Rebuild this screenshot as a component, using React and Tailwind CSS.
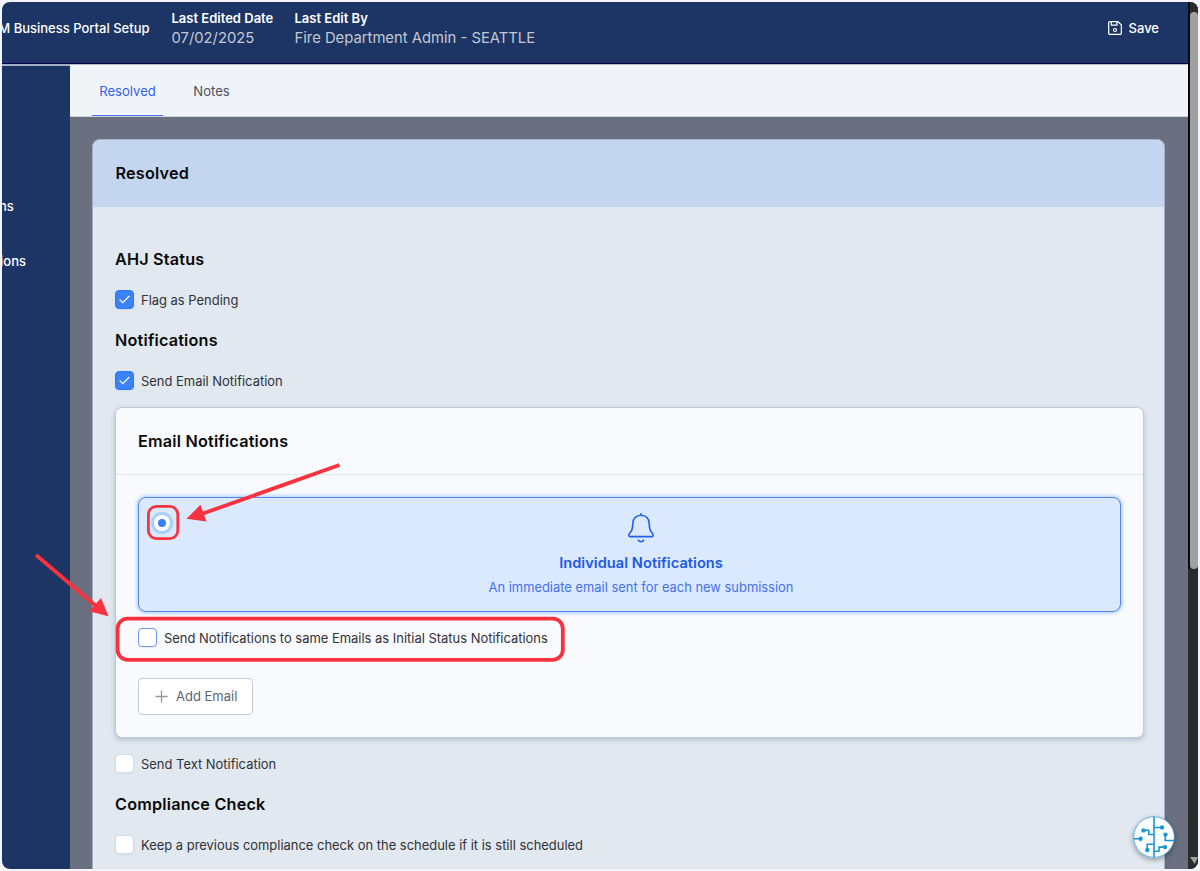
import { useState } from "react";

const tabs = ["Resolved", "Notes"];

const SaveIcon = () => (
  <svg width="14" height="14" viewBox="0 0 14 14" fill="none" stroke="currentColor" strokeWidth="1.2">
    <path d="M1.8 0.7h8.1l3.4 3.1v8.4a1.1 1.1 0 0 1-1.1 1.1H1.8a1.1 1.1 0 0 1-1.1-1.1V1.8A1.1 1.1 0 0 1 1.8 0.7z" />
    <path d="M3.3 0.9v3.3h5.6V0.9" />
    <circle cx="7" cy="9" r="1.5" />
  </svg>
);

const BellIcon = () => (
  <svg width="26" height="30" viewBox="0 0 26 30" fill="none" stroke="#2360e8" strokeWidth="1.6" strokeLinecap="round">
    <path d="M13 0.8v1.4" />
    <path d="M13 2.2c-5 0-8.2 3.4-8.2 8.2 0 5-0.8 7.4-3 9.6-1.3 1.4-1.3 3.6 0.4 3.6h21.6c1.7 0 1.7-2.2 0.4-3.6-2.2-2.2-3-4.6-3-9.6 0-4.8-3.2-8.2-8.2-8.2z" />
    <path d="M10.3 27.2c1.1 2 4.3 2 5.4 0" />
  </svg>
);

const CircuitLogo = () => (
  <svg width="42" height="42" viewBox="0 0 42 42" fill="none" stroke="#1b96d4" strokeWidth="1.6">
    <circle cx="21" cy="21" r="20.3" fill="#fff" strokeWidth="0.7" />
    <path d="M21 0.8v40.4" />
    <path d="M21 11.5h8M10 14.3h5.8v4.2h5.2M0.6 22.7h7M21 28.3h-6.8v6M32.3 18.7v5.8h9M21 35.3h5v-4.2h6" />
    <g fill="#1b96d4" stroke="none">
      <circle cx="29" cy="11.4" r="2.2" />
      <circle cx="10.5" cy="14.4" r="2.2" />
      <circle cx="7.6" cy="22.8" r="2.2" />
      <circle cx="32.5" cy="18.6" r="2.2" />
      <circle cx="14.3" cy="34" r="2.2" />
      <circle cx="32" cy="31.1" r="2.2" />
    </g>
  </svg>
);

const CheckRow = ({ label, defaultChecked = false, outlined = false, className = "" }) => {
  const [checked, setChecked] = useState(defaultChecked);

  const boxStyle = checked
    ? "bg-[#3b82f6] border-[#2b7af5]"
    : outlined
      ? "bg-white border-[#6d97f5]"
      : "bg-white border-[#d3dbe6]";

  return (
    <div
      onClick={() => setChecked(!checked)}
      className={`flex h-[18px] items-start gap-x-[7px] ${className}`}
    >
      <span
        className={`-mt-px flex h-[19px] w-[19px] shrink-0 items-center justify-center rounded-[4px] border shadow-xs ${boxStyle}`}
      >
        {checked && (
          <svg width="11" height="9" viewBox="0 0 11 9" fill="none" stroke="#fff" strokeWidth="1.1">
            <path d="M0.6 4.4l3.2 3.2L10.3 1" />
          </svg>
        )}
      </span>
      <span className="whitespace-nowrap text-[12.94px] leading-[18px] text-[#2f3237]">{label}</span>
    </div>
  );
};

const SectionTitle = ({ children, className = "" }) => (
  <h3 className={`h-6 text-[16.2px] font-semibold leading-6 tracking-[0.2px] text-[#0a0a0a] ${className}`}>
    {children}
  </h3>
);

// red arrows and frames over the form
const Callouts = () => (
  <svg className="pointer-events-none absolute left-0 top-0" width="1200" height="871" fill="none">
    <g stroke="#f8333f" strokeWidth="3.8">
      <path d="M339.5 465L203 513.5" />
      <path d="M36 555L96 606" />
      <rect x="148.4" y="506.3" width="29.4" height="32.4" rx="8" strokeWidth="2.8" />
      <rect x="117.6" y="618.6" width="445.2" height="41.2" rx="10" />
    </g>
    <path d="M186.5 518.8L200.5 504.8L206.5 521.6z" fill="#f8333f" />
    <path d="M108.5 616.3L101 598L89 611.3z" fill="#f8333f" />
  </svg>
);

const App = () => {
  const [activeTab, setActiveTab] = useState("Resolved");

  return (
    <div className="relative h-[871px] w-[1200px] overflow-hidden bg-[#f4f5fb] p-0.5 font-['Inter',sans-serif]">
      <div className="flex h-[867px] w-[1196px] overflow-hidden rounded-[8px] bg-[#1c3564]">

        <div className="flex w-[1186px] shrink-0 flex-col">
          {/* top bar */}
          <header className="flex h-[62px] shrink-0 border-b border-[#03034f] text-white">
            <div className="flex w-[147.5px] shrink-0 justify-end overflow-hidden">
              <p className="mt-[15.5px] whitespace-nowrap text-[13px] font-medium leading-5">M Business Portal Setup</p>
            </div>
            <div className="ml-[22px] mt-[7px] w-[123px]">
              <p className="whitespace-nowrap text-[13px] font-semibold leading-[19px]">Last Edited Date</p>
              <p className="text-[14.8px] leading-5 text-[#c3c8d2]">07/02/2025</p>
            </div>
            <div className="mt-[7px]">
              <p className="text-[13px] font-semibold leading-[19px]">Last Edit By</p>
              <p className="text-[14.8px] leading-5 text-[#c3c8d2]">Fire Department Admin - SEATTLE</p>
            </div>
            <button className="ml-auto mr-[29px] mt-4 flex h-5 items-center gap-x-[7px] text-[13px] font-medium">
              <SaveIcon />
              <span className="pt-px">Save</span>
            </button>
          </header>

          <div className="flex min-h-0 flex-1">
            <aside className="w-[68px] shrink-0 overflow-hidden border-t-2 border-t-[#a4aec4] text-[13px] font-medium leading-5 text-white">
              <p className="ml-[-3px] mt-[130px]">ns</p>
              <p className="ml-[-2px] mt-[35px]">ions</p>
            </aside>

            <main className="flex min-w-0 flex-1 flex-col bg-[#6b7080]">
              <nav className="flex h-[53px] shrink-0 border-b border-t border-b-[#cbd3e0] border-t-[#b6bfd0] bg-[#f0f4f9] pl-[22px]">
                {tabs.map((tab) => (
                  <button
                    key={tab}
                    onClick={() => setActiveTab(tab)}
                    className={`mr-[22px] h-[51px] border-b pt-[3px] text-[13.1px] ${
                      activeTab === tab
                        ? "w-[71px] border-b-[#4f74f0] text-[#3461ea]"
                        : "w-[53px] border-b-transparent text-[#4b5059]"
                    }`}
                  >
                    {tab}
                  </button>
                ))}
              </nav>

              <section className="ml-[22px] mt-[22px] min-h-0 w-[1073px] flex-1 overflow-hidden rounded-t-[8px] border border-b-0 border-[#a3afc6] bg-[#e1e8f0]">
                <div className="flex h-[67px] items-center bg-[#c4d5f0] pb-0.5 pl-[22.5px]">
                  <h2 className="text-[16.2px] font-semibold leading-6 tracking-[0.2px] text-[#0a0a0a]">Resolved</h2>
                </div>

                <div className="pl-[22px] pr-5 pt-10">
                  <SectionTitle>AHJ Status</SectionTitle>
                  <CheckRow label="Flag as Pending" defaultChecked className="mt-5" />

                  <SectionTitle className="mt-[19px]">Notifications</SectionTitle>
                  <CheckRow label="Send Email Notification" defaultChecked className="mt-5" />

                  <div className="mt-[17px] h-[331px] rounded-[7px] border border-[#bfc9da] bg-[#f9fafd] shadow-[0_2px_5px_rgba(71,85,120,0.3)]">
                    <div className="flex h-[67px] items-center border-b border-[#e0e6ef] pb-px pl-[22px]">
                      <h3 className="text-[16.2px] font-semibold leading-6 tracking-[0.2px] text-[#0a0a0a]">Email Notifications</h3>
                    </div>

                    <div className="px-[22px] pt-[22px]">
                      <div className="flex h-[115px] rounded-[8px] border border-[#5884ef] bg-[#dbe9fe] shadow-[0_0_3px_2px_#bfdbfe]">
                        <span className="ml-[15px] mt-[17px] flex h-4 w-4 shrink-0 items-center justify-center rounded-full bg-white ring-[3px] ring-[#a9cffb]">
                          <span className="h-2 w-2 rounded-full bg-[#3580f5]"></span>
                        </span>
                        <div className="ml-[-8px] flex flex-1 flex-col items-center pt-[15px]">
                          <BellIcon />
                          <p className="mt-[10px] text-[14.6px] font-semibold leading-5 tracking-[0.05px] text-[#2158e6]">Individual Notifications</p>
                          <p className="mt-1 text-[12.92px] leading-5 text-[#4571ec]">An immediate email sent for each new submission</p>
                        </div>
                      </div>

                      <CheckRow
                        label="Send Notifications to same Emails as Initial Status Notifications"
                        outlined
                        className="mt-[17px]"
                      />

                      <button className="mt-[31px] flex h-[37px] w-[115px] items-center rounded-[4px] border border-[#c0cad9] bg-white pl-4 text-[13px] text-[#5b6472]">
                        <svg className="mr-2" width="13" height="13" viewBox="0 0 13 13" stroke="#8f979f" strokeWidth="1.3">
                          <path d="M6.5 0.5v12M0.5 6.5h12" />
                        </svg>
                        Add Email
                      </button>
                    </div>
                  </div>

                  <CheckRow label="Send Text Notification" className="mt-[17px]" />

                  <SectionTitle className="mt-[19px]">Compliance Check</SectionTitle>
                  <CheckRow
                    label="Keep a previous compliance check on the schedule if it is still scheduled"
                    className="mt-5"
                  />
                </div>
              </section>
            </main>
          </div>
        </div>

        {/* scrollbar */}
        <div className="flex w-[10px] shrink-0 flex-col items-end justify-between bg-[#2b2b2b]">
          <div className="flex h-[567px] w-[10px] justify-end border-l-2 border-[#0b0b0b] pt-[10px]">
            <div className="w-2 rounded-t-[5px] rounded-b-[5px] bg-[#a0a0a0]"></div>
          </div>
          <svg className="mb-[5px]" width="8" height="7" viewBox="0 0 8 7">
            <path d="M0 0h8L4.7 7z" fill="#a0a0a0" />
          </svg>
        </div>
      </div>

      <div className="absolute left-[1132.5px] top-[816px] rounded-full shadow-[0_2px_5px_rgba(0,0,0,0.35)]">
        <CircuitLogo />
      </div>
      <Callouts />
    </div>
  );
};

export default App;
